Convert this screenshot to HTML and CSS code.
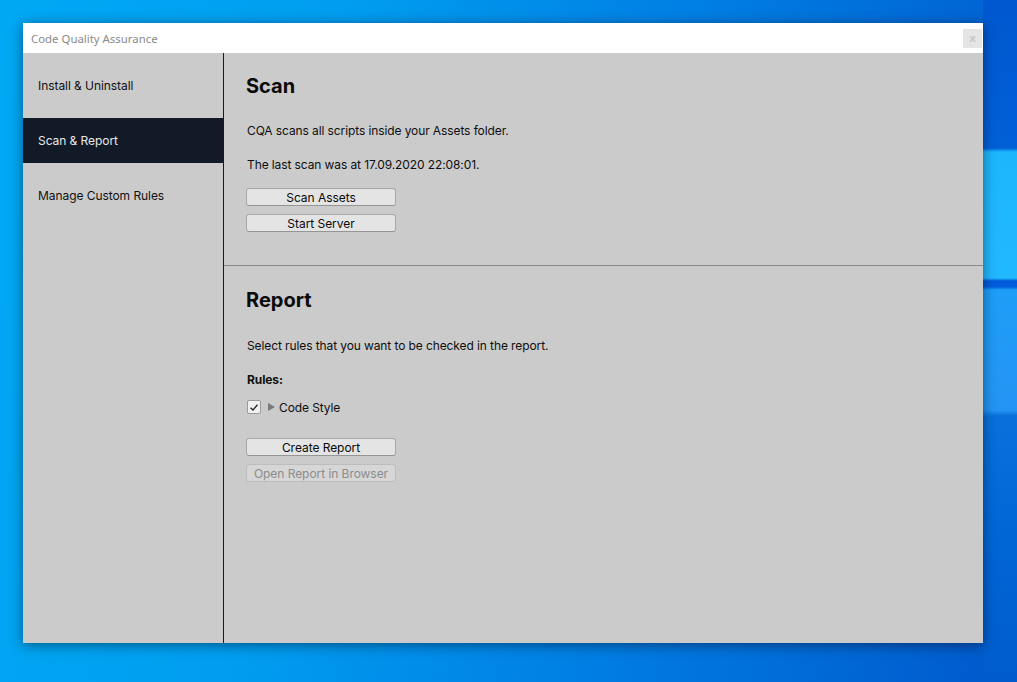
FILE: index.html
```html
<!DOCTYPE html>
<html>
<head>
<meta charset="utf-8">
<link rel="stylesheet" href="styles.css">
</head>
<body>
<div class="desktop">
  <div class="window">
    <div class="titlebar">
      <span class="title">Code Quality Assurance</span>
      <span class="close">x</span>
    </div>
    <div class="body">
      <nav class="sidebar">
        <div class="nav-item">Install &amp; Uninstall</div>
        <div class="nav-item active">Scan &amp; Report</div>
        <div class="nav-item">Manage Custom Rules</div>
      </nav>
      <main class="main">
        <section class="section scan">
          <h2 class="heading">Scan</h2>
          <p class="text t1">CQA scans all scripts inside your Assets folder.</p>
          <p class="text t2">The last scan was at 17.09.2020 22:08:01.</p>
          <div class="buttons">
            <button class="btn">Scan Assets</button>
            <button class="btn">Start Server</button>
          </div>
        </section>
        <section class="section report">
          <h2 class="heading">Report</h2>
          <p class="text t3">Select rules that you want to be checked in the report.</p>
          <p class="text bold t4">Rules:</p>
          <div class="rule-row">
            <span class="checkbox"><svg width="10" height="9" viewBox="0 0 10 9"><path d="M1.5 4.8 L4 7 L8.5 1.8" fill="none" stroke="#222" stroke-width="1.3"/></svg></span>
            <span class="arrow"></span>
            <span class="rule-label">Code Style</span>
          </div>
          <div class="buttons b2">
            <button class="btn">Create Report</button>
            <button class="btn disabled">Open Report in Browser</button>
          </div>
        </section>
      </main>
    </div>
  </div>
</div>
</body>
</html>
```

FILE: styles.css
```css
html, body {
  margin: 0;
  padding: 0;
  height: 100%;
}
body {
  overflow: hidden;
  background:
    linear-gradient(180deg,
      #0058d0 0px, #0060d8 148px,
      #1cb6fc 152px, #22b8ff 278px,
      #0058d8 281px, #0060e0 287px,
      #1e9ef8 290px, #2494f4 410px,
      #0a70dc 416px, #0066d6 540px, #005ccc 682px) right top / 34px 100% no-repeat,
    linear-gradient(100deg, #00a8f4 0%, #009ef0 30%, #0080e4 60%, #0058cc 100%);
  font-family: Inter, "Noto Sans", sans-serif;
}
.desktop {
  padding: 23px;
}
.window {
  width: 960px;
  height: 620px;
  display: flex;
  flex-direction: column;
  box-shadow: 0 2px 12px rgba(0, 0, 0, 0.45);
}
.titlebar {
  height: 30px;
  background: #ffffff;
  display: flex;
  align-items: center;
  justify-content: space-between;
  padding: 0 1px 0 8px;
}
.title {
  font-family: "Noto Sans", sans-serif;
  font-size: 11.4px;
  color: #8a8a8a;
  margin-top: 1px;
}
.close {
  width: 19px;
  height: 19px;
  background: #e5e5e5;
  color: #c9c9c9;
  font-family: "DejaVu Sans", sans-serif;
  font-size: 11px;
  font-weight: bold;
  display: flex;
  align-items: center;
  justify-content: center;
  line-height: 1;
}
.body {
  flex: 1;
  display: flex;
  background: #cbcbcb;
}
.sidebar {
  width: 200px;
  border-right: 1px solid #121a26;
  padding-top: 10px;
  display: flex;
  flex-direction: column;
  gap: 10px;
}
.nav-item {
  height: 45px;
  display: flex;
  align-items: center;
  padding-left: 15px;
  font-size: 12px;
  letter-spacing: -0.06px;
  color: #111111;
}
.nav-item.active {
  background: #111a26;
  color: #e8e8e8;
}
.main {
  flex: 1;
  display: flex;
  flex-direction: column;
}
.section {
  padding: 21px 22px 0 22px;
}
.scan {
  padding-bottom: 33px;
  border-bottom: 1px solid #8a8a8a;
}
.report {
  padding-top: 22px;
}
.heading {
  margin: 0;
  font-size: 20px;
  line-height: 24px;
  font-weight: 700;
  color: #0a0a0a;
}
.text {
  margin: 0;
  font-size: 12px;
  line-height: 16px;
  letter-spacing: -0.1px;
  color: #0e0e0e;
  padding-left: 1px;
}
.bold { font-weight: 700; }
.t1 { margin-top: 25px; }
.t2 { margin-top: 18px; }
.t3 { margin-top: 26px; }
.t4 { margin-top: 18px; }
.buttons {
  margin-top: 15px;
  display: flex;
  flex-direction: column;
  gap: 8px;
}
.b2 { margin-top: 23px; }
.btn {
  width: 150px;
  height: 18px;
  padding: 1px 0 0 0;
  background: #e4e4e4;
  border: 1px solid #a8a8a8;
  border-bottom-color: #959595;
  border-radius: 3px;
  font-family: Inter, "Noto Sans", sans-serif;
  font-size: 12px;
  line-height: 15px;
  letter-spacing: -0.05px;
  color: #090909;
  text-align: center;
}
.btn.disabled {
  background: #d6d6d6;
  border-color: #bdbdbd;
  color: #8c8c8c;
}
.rule-row {
  margin-top: 11px;
  height: 16px;
  display: flex;
  align-items: center;
  padding-left: 1px;
}
.checkbox {
  width: 12px;
  height: 12px;
  background: #f0f0f0;
  border: 1px solid #9a9a9a;
  border-radius: 2px;
  display: flex;
  align-items: center;
  justify-content: center;
}
.arrow {
  width: 0;
  height: 0;
  border-top: 4.5px solid transparent;
  border-bottom: 4.5px solid transparent;
  border-left: 7px solid #7a7a7a;
  margin-left: 7px;
}
.rule-label {
  margin-left: 4px;
  font-size: 12px;
  letter-spacing: -0.1px;
  color: #0e0e0e;
}
```
